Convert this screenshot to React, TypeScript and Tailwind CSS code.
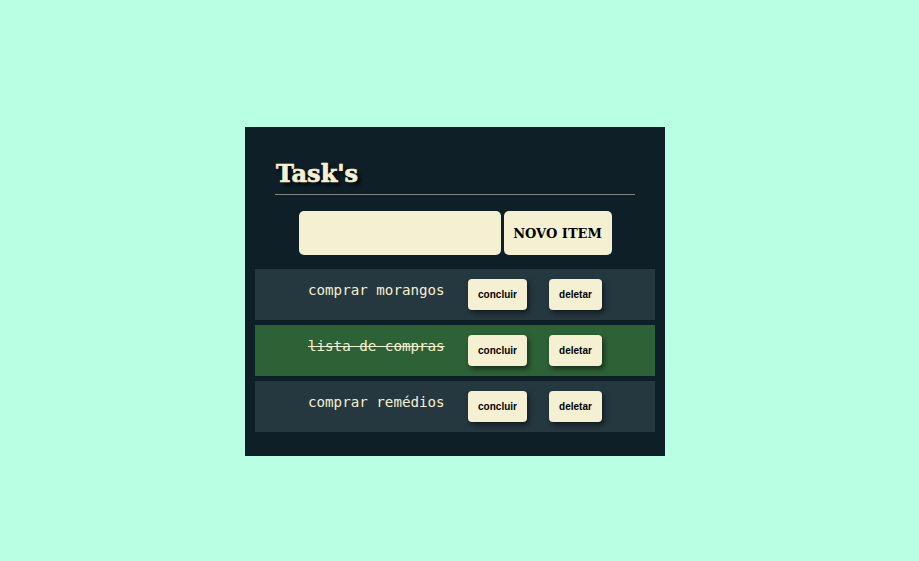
import React from "react";

const items = [
  { text: "comprar morangos", done: false },
  { text: "lista de compras", done: true },
  { text: "comprar remédios", done: false },
];

export default function App() {
  return (
    <div className="min-h-[561px] w-full bg-[#b9ffe4] pt-[127px] pl-[245px]">
      <div className="w-[420px] h-[329px] bg-[#0e1f27] pt-[30px] px-[10px]">
        <div className="mx-[20px] border-b border-[#7d8580] h-[38px] flex items-end pb-[8px]">
          <h1
            className="text-[24px] font-bold leading-none text-[#f6f0d2] pl-[1px] [-webkit-text-stroke:0.7px_#f6f0d2]"
            style={{ fontFamily: '"DejaVu Serif", serif', textShadow: "3px 3px 4px #000" }}
          >
            Task's
          </h1>
        </div>
        <div className="flex justify-center gap-[3px] mt-[16px] mb-[14px]">
          <input className="w-[202px] h-[44px] rounded-[5px] bg-[#f6f0d2] outline-none" />
          <button
            className="w-[108px] h-[44px] rounded-[5px] bg-[#f6f0d2] text-[13px] font-bold text-black pt-[2px]"
            style={{ fontFamily: '"DejaVu Serif", serif' }}
          >
            NOVO ITEM
          </button>
        </div>
        <div className="flex flex-col gap-[5px]">
          {items.map((it) => (
            <div
              key={it.text}
              className={`h-[51px] flex items-center pl-[53px] ${it.done ? "bg-[#2d6136]" : "bg-[#25373f]"}`}
            >
              <span
                className={`w-[160px] text-[14.2px] text-[#f6f0d2] mb-[7px] ${it.done ? "line-through" : ""}`}
                style={{ fontFamily: '"DejaVu Sans Mono", monospace' }}
              >
                {it.text}
              </span>
              <button
                className="w-[59px] h-[31px] rounded-[4px] bg-[#f6f0d2] text-[10px] font-bold text-black shadow-[2px_3px_5px_rgba(0,0,0,0.5)]"
                style={{ fontFamily: '"Liberation Sans", Arial, sans-serif' }}
              >
                concluir
              </button>
              <button
                className="ml-[22px] w-[53px] h-[31px] rounded-[4px] bg-[#f6f0d2] text-[10px] font-bold text-black shadow-[2px_3px_5px_rgba(0,0,0,0.5)]"
                style={{ fontFamily: '"Liberation Sans", Arial, sans-serif' }}
              >
                deletar
              </button>
            </div>
          ))}
        </div>
      </div>
    </div>
  );
}
